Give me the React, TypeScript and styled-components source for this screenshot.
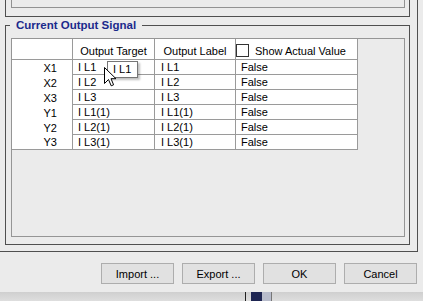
import React from "react";
import styled, { createGlobalStyle } from "styled-components";

const Global = createGlobalStyle`
  html, body { margin: 0; padding: 0; background: #d6d6d6; }
  body { font-family: "Liberation Sans", Arial, sans-serif; font-size: 11px; color: #000; }
  #root { width: 423px; height: 301px; overflow: hidden; }
`;

const Dialog = styled.div`
  position: relative;
  width: 423px;
  height: 292px;
  background: #ebebeb;
  display: flex;
  flex-direction: column;
`;

const TabFrame = styled.div`
  box-sizing: border-box;
  width: 418px;
  height: 252px;
  border-right: 1px solid #4f4f4f;
  border-bottom: 1px solid #4f4f4f;
  padding: 0 7px 0 5px;
  display: flex;
  flex-direction: column;
`;

const PrevGroup = styled.div`
  box-sizing: border-box;
  height: 17px;
  border: 1px solid #4f4f4f;
  border-top: none;
  padding: 0 4px 0 5px;
`;

const PrevInner = styled.div`
  box-sizing: border-box;
  height: 8px;
  border: 1px solid #929292;
  border-top: none;
`;

const Group = styled.div`
  position: relative;
  box-sizing: border-box;
  margin-top: 8px;
  height: 220px;
  border: 1px solid #4f4f4f;
  padding: 12px 4px 7px 5px;
  display: flex;
  flex-direction: column;
`;

const GroupTitle = styled.div`
  position: absolute;
  top: -8px;
  left: 4px;
  padding: 0 6px;
  line-height: 14px;
  background: #ebebeb;
  color: #1b2a8c;
  font-weight: bold;
  font-size: 11.5px;
`;

const Panel = styled.div`
  flex: 1;
  border: 1px solid #959595;
  display: flex;
  align-items: flex-start;
`;

const Grid = styled.div`
  display: grid;
  grid-template-columns: 61px 82px 81px 122px;
  grid-template-rows: 21px repeat(6, 15px);
  background: #fff;
`;

const HeadCell = styled.div<{ $first?: boolean; $align?: string }>`
  box-sizing: border-box;
  border-right: 1px solid #9a9a9a;
  border-bottom: 1px solid #9a9a9a;
  padding-top: 3px;
  display: flex;
  align-items: center;
  justify-content: ${(p) => p.$align || "center"};
  white-space: nowrap;
`;

const RowHead = styled.div<{ $last?: boolean }>`
  box-sizing: border-box;
  border-right: 1px solid #9a9a9a;
  border-bottom: ${(p) => (p.$last ? "1px solid #9a9a9a" : "none")};
  padding-right: 15px;
  display: flex;
  align-items: center;
  justify-content: flex-end;
`;

const Cell = styled.div<{ $pad?: number }>`
  box-sizing: border-box;
  border-right: 1px solid #9a9a9a;
  border-bottom: 1px solid #9a9a9a;
  padding-left: ${(p) => p.$pad ?? 5}px;
  display: flex;
  align-items: center;
  white-space: nowrap;
`;

const CheckBox = styled.span`
  box-sizing: border-box;
  width: 13px;
  height: 13px;
  border: 1px solid #333;
  background: #fff;
  margin-right: 6px;
`;

const ButtonRow = styled.div`
  margin-top: 11px;
  display: flex;
  justify-content: flex-end;
  gap: 8px;
  padding-right: 6px;
`;

const Button = styled.button`
  box-sizing: border-box;
  width: 73px;
  height: 21px;
  background: #e1e1e1;
  border: 1px solid #adadad;
  border-radius: 0;
  font-family: "Liberation Sans", Arial, sans-serif;
  font-size: 11px;
  color: #000;
  padding: 0;
`;

const Tooltip = styled.div`
  position: absolute;
  left: 107px;
  top: 61px;
  box-sizing: border-box;
  width: 31px;
  height: 17px;
  background: #fff;
  border: 1px solid #767676;
  box-shadow: 2px 2px 2px rgba(0, 0, 0, 0.25);
  padding-left: 5px;
  line-height: 15px;
`;

const Cursor = styled.svg`
  position: absolute;
  left: 104px;
  top: 67px;
`;

const Desktop = styled.div`
  height: 9px;
  background: linear-gradient(#cfcfcf, #dedede);
  display: flex;
  padding-left: 245px;
`;

const rows = [
  ["X1", "I L1"],
  ["X2", "I L2"],
  ["X3", "I L3"],
  ["Y1", "I L1(1)"],
  ["Y2", "I L2(1)"],
  ["Y3", "I L3(1)"],
];

export default function App() {
  return (
    <>
      <Global />
      <Dialog>
        <TabFrame>
          <PrevGroup>
            <PrevInner />
          </PrevGroup>
          <Group>
            <GroupTitle>Current Output Signal</GroupTitle>
            <Panel>
              <Grid>
                <HeadCell $first />
                <HeadCell>Output Target</HeadCell>
                <HeadCell>Output Label</HeadCell>
                <HeadCell $align="flex-start">
                  <CheckBox />
                  Show Actual Value
                </HeadCell>
                {rows.map(([h, v], i) => (
                  <React.Fragment key={h}>
                    <RowHead $last={i === rows.length - 1}>{h}</RowHead>
                    <Cell>{v}</Cell>
                    <Cell $pad={6}>{v}</Cell>
                    <Cell>False</Cell>
                  </React.Fragment>
                ))}
              </Grid>
            </Panel>
          </Group>
        </TabFrame>
        <ButtonRow>
          <Button>Import ...</Button>
          <Button>Export ...</Button>
          <Button>OK</Button>
          <Button>Cancel</Button>
        </ButtonRow>
        <Tooltip>I L1</Tooltip>
        <Cursor width="13" height="21" viewBox="0 0 13 21">
          <path
            d="M0.5 0.5 L0.5 16.5 L4.5 12.5 L7.2 18.8 L9.6 17.8 L7 11.7 L12 11.7 Z"
            fill="#fff"
            stroke="#000"
            strokeWidth="1"
            strokeLinejoin="miter"
          />
        </Cursor>
      </Dialog>
      <Desktop>
        <svg width="28" height="9" viewBox="0 0 28 9">
          <rect x="0" y="0" width="1" height="9" fill="#222" />
          <rect x="6" y="0" width="11" height="9" fill="#1e2552" />
          <rect x="17" y="0" width="9" height="9" fill="#b8bccb" />
          <rect x="26" y="0" width="1" height="9" fill="#777" />
        </svg>
      </Desktop>
    </>
  );
}
